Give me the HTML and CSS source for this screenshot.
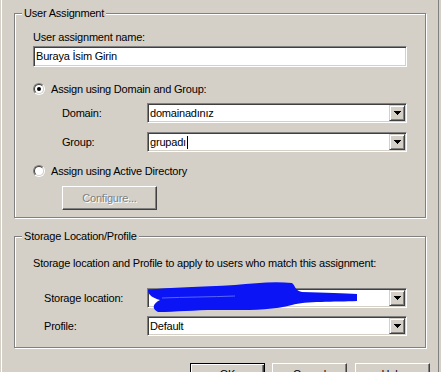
FILE: index.html
```html
<!DOCTYPE html>
<html>
<head>
<meta charset="utf-8">
<link rel="stylesheet" href="styles.css">
</head>
<body>
<div class="page">
  <div class="tab">
    <div class="group g1">
      <div class="legend">User Assignment</div>
      <div class="label">User assignment name:</div>
      <div class="field">Buraya İsim Girin</div>
      <div class="radio-row r1">
        <span class="radio"><span class="radio-in"><span class="dot"></span></span></span>
        <span class="rtext">Assign using Domain and Group:</span>
      </div>
      <div class="combo-row cr1">
        <span class="clabel">Domain:</span>
        <div class="combo">
          <span class="ctext">domainadınız</span>
          <span class="dd"><svg width="7" height="4" viewBox="0 0 7 4" shape-rendering="crispEdges"><rect x="0" y="0" width="7" height="1"/><rect x="1" y="1" width="5" height="1"/><rect x="2" y="2" width="3" height="1"/><rect x="3" y="3" width="1" height="1"/></svg></span>
        </div>
      </div>
      <div class="combo-row cr2">
        <span class="clabel">Group:</span>
        <div class="combo">
          <span class="ctext">grupadı</span><span class="caret"></span>
          <span class="dd"><svg width="7" height="4" viewBox="0 0 7 4" shape-rendering="crispEdges"><rect x="0" y="0" width="7" height="1"/><rect x="1" y="1" width="5" height="1"/><rect x="2" y="2" width="3" height="1"/><rect x="3" y="3" width="1" height="1"/></svg></span>
        </div>
      </div>
      <div class="radio-row r2">
        <span class="radio"><span class="radio-in"></span></span>
        <span class="rtext">Assign using Active Directory</span>
      </div>
      <div class="btn cfg disabled">Configure...</div>
    </div>

    <div class="group g2">
      <div class="legend">Storage Location/Profile</div>
      <div class="label">Storage location and Profile to apply to users who match this assignment:</div>
      <div class="combo-row sr1">
        <span class="clabel wide">Storage location:</span>
        <div class="combo">
          <span class="ctext"></span>
          <span class="dd"><svg width="7" height="4" viewBox="0 0 7 4" shape-rendering="crispEdges"><rect x="0" y="0" width="7" height="1"/><rect x="1" y="1" width="5" height="1"/><rect x="2" y="2" width="3" height="1"/><rect x="3" y="3" width="1" height="1"/></svg></span>
        </div>
      </div>
      <div class="combo-row sr2">
        <span class="clabel wide">Profile:</span>
        <div class="combo">
          <span class="ctext">Default</span>
          <span class="dd"><svg width="7" height="4" viewBox="0 0 7 4" shape-rendering="crispEdges"><rect x="0" y="0" width="7" height="1"/><rect x="1" y="1" width="5" height="1"/><rect x="2" y="2" width="3" height="1"/><rect x="3" y="3" width="1" height="1"/></svg></span>
        </div>
      </div>
    </div>

    <div class="buttons">
      <div class="btn default">OK</div>
      <div class="btn b-cancel">Cancel</div>
      <div class="btn b-help">Help</div>
    </div>
  </div>

  <svg class="scribble" width="441" height="372" viewBox="0 0 441 372">
    <path d="M148,290 C170,287 200,287 235,285 C255,283 275,281 292,283 C296,286 294,290 302,292 C325,293 345,293 357,294 L357,301 C335,302 305,301 292,305 C270,311 240,310 215,310 C195,310 175,312 158,312 C152,309 152,304 160,300 C153,298 148,295 148,290 Z" fill="#0a14f5"/>
    <path d="M162,298 C185,297 210,297 235,296" fill="none" stroke="#5a66f8" stroke-width="1"/>
  </svg>
</div>
</body>
</html>
```

FILE: styles.css
```css
body {
  margin: 0;
  background: #d4d0c8;
  font-family: "Liberation Sans", Arial, sans-serif;
  font-size: 11px;
  line-height: 13px;
  letter-spacing: -0.2px;
  color: #000;
}

.page {
  position: relative;
  width: 441px;
  height: 372px;
  overflow: hidden;
  background: #d4d0c8;
}

.tab {
  box-sizing: border-box;
  width: 438px;
  height: 372px;
  margin-left: 1px;
  border-left: 1px solid #ffffff;
  border-right: 1px solid #808080;
  padding: 13px 0 0 12px;
}

.group {
  position: relative;
  box-sizing: border-box;
  width: 412px;
  border: 1px solid #808080;
  box-shadow: 1px 1px 0 #ffffff, inset 1px 1px 0 #ffffff;
}

.g1 {
  height: 205px;
  padding: 17px 0 0 18px;
}

.g2 {
  height: 112px;
  margin-top: 18px;
  padding: 20px 0 0 18px;
}

.legend {
  position: absolute;
  top: -7px;
  left: 7px;
  padding: 0 2px;
  background: #d4d0c8;
  white-space: nowrap;
}

.label {
  white-space: nowrap;
}

.field {
  box-sizing: border-box;
  width: 374px;
  height: 21px;
  margin-top: 2px;
  padding: 3px 2px 0;
  background: #ffffff;
  border: 1px solid;
  border-color: #808080 #ffffff #ffffff #808080;
  box-shadow: inset 1px 1px 0 #404040, inset -1px -1px 0 #d4d0c8;
  white-space: nowrap;
}

.radio-row {
  display: flex;
  align-items: center;
  gap: 6px;
  height: 14px;
}

.r1 { margin-top: 15px; }
.r2 { margin-top: 12px; }

.radio {
  box-sizing: border-box;
  width: 12px;
  height: 12px;
  border-radius: 50%;
  border: 1px solid;
  border-color: #808080 #ffffff #ffffff #808080;
}

.radio-in {
  box-sizing: border-box;
  display: flex;
  align-items: center;
  justify-content: center;
  width: 10px;
  height: 10px;
  border-radius: 50%;
  border: 1px solid;
  border-color: #404040 #d4d0c8 #d4d0c8 #404040;
  background: #ffffff;
}

.dot {
  width: 4px;
  height: 4px;
  border-radius: 50%;
  background: #000000;
}

.combo-row {
  display: flex;
  align-items: center;
  padding-left: 29px;
}

.cr1 { margin-top: 7px; }
.cr2 { margin-top: 9px; }
.sr1 { margin-top: 18px; padding-left: 11px; }
.sr2 { margin-top: 8px; padding-left: 11px; }

.clabel {
  width: 85px;
  white-space: nowrap;
}

.clabel.wide {
  width: 103px;
}

.combo {
  box-sizing: border-box;
  display: flex;
  align-items: center;
  width: 260px;
  height: 20px;
  padding: 0 1px 0 2px;
  background: #ffffff;
  border: 1px solid;
  border-color: #808080 #ffffff #ffffff #808080;
  box-shadow: inset 1px 1px 0 #404040, inset -1px -1px 0 #d4d0c8;
}

.ctext {
  white-space: nowrap;
}

.caret {
  width: 1px;
  height: 13px;
  margin-left: 1px;
  background: #000000;
}

.dd {
  box-sizing: border-box;
  display: flex;
  align-items: center;
  justify-content: center;
  width: 16px;
  height: 16px;
  margin-left: auto;
  background: #d4d0c8;
  border: 1px solid;
  border-color: #d4d0c8 #404040 #404040 #d4d0c8;
  box-shadow: inset 1px 1px 0 #ffffff, inset -1px -1px 0 #808080;
}

.dd svg {
  display: block;
  fill: #000000;
}

.btn {
  box-sizing: border-box;
  display: flex;
  align-items: center;
  justify-content: center;
  width: 75px;
  height: 23px;
  background: #d4d0c8;
  border: 1px solid;
  border-color: #ffffff #404040 #404040 #ffffff;
  box-shadow: inset -1px -1px 0 #808080, inset 1px 1px 0 #d4d0c8;
  white-space: nowrap;
}

.cfg {
  width: 95px;
  height: 24px;
  margin: 8px 0 0 29px;
}

.disabled {
  color: #808080;
  text-shadow: 1px 1px 0 #ffffff;
}

.buttons {
  display: flex;
  justify-content: flex-end;
  width: 416px;
  margin-top: 15px;
}

.default {
  border-color: #000000;
  box-shadow: inset 1px 1px 0 #ffffff, inset -1px -1px 0 #404040, inset -2px -2px 0 #808080;
}

.b-cancel { margin-left: 7px; }
.b-help { margin-left: 8px; }

.scribble {
  position: absolute;
  left: 0;
  top: 0;
  pointer-events: none;
}
```
